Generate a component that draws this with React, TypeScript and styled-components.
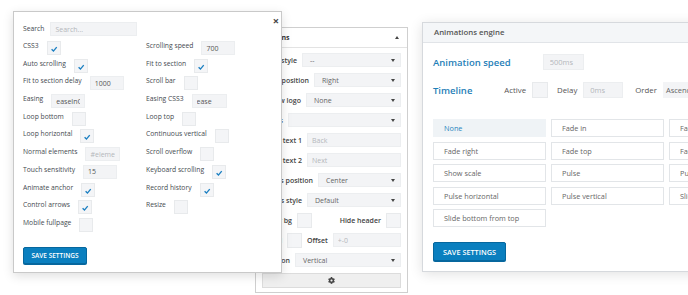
import styled, { createGlobalStyle } from 'styled-components'
import { FaCog } from 'react-icons/fa'

const GlobalStyle = createGlobalStyle`
    body {
        margin: 0;
        background: #fff;
        font-family: 'Open Sans', 'Noto Sans', sans-serif;
    }
`

type Ctl =
    | { kind: 'check'; on?: boolean }
    | { kind: 'text'; w: number; value?: string; placeholder?: string }

const modalFields: [string, Ctl][] = [
    ['CSS3', { kind: 'check', on: true }],
    ['Scrolling speed', { kind: 'text', w: 34, value: '700' }],
    ['Auto scrolling', { kind: 'check', on: true }],
    ['Fit to section', { kind: 'check', on: true }],
    ['Fit to section delay', { kind: 'text', w: 34, value: '1000' }],
    ['Scroll bar', { kind: 'check' }],
    ['Easing', { kind: 'text', w: 34, value: 'easeInOutCubic' }],
    ['Easing CSS3', { kind: 'text', w: 35, value: 'ease' }],
    ['Loop bottom', { kind: 'check' }],
    ['Loop top', { kind: 'check' }],
    ['Loop horizontal', { kind: 'check', on: true }],
    ['Continuous vertical', { kind: 'check' }],
    ['Normal elements', { kind: 'text', w: 35, placeholder: '#element' }],
    ['Scroll overflow', { kind: 'check' }],
    ['Touch sensitivity', { kind: 'text', w: 34, value: '15' }],
    ['Keyboard scrolling', { kind: 'check', on: true }],
    ['Animate anchor', { kind: 'check', on: true }],
    ['Record history', { kind: 'check', on: true }],
    ['Control arrows', { kind: 'check', on: true }],
    ['Resize', { kind: 'check' }],
    ['Mobile fullpage', { kind: 'check' }],
]

const animations = [
    'None', 'Fade in', 'Fade left',
    'Fade right', 'Fade top', 'Fade bottom',
    'Show scale', 'Pulse', 'Pulse scale',
    'Pulse horizontal', 'Pulse vertical', 'Slide top from bottom',
    'Slide bottom from top',
]

const Tick = () => (
    <svg width="8" height="8" viewBox="0 0 10 10">
        <path d="M2 5.4l2.3 2.2L8.4 2.6" fill="none" stroke="#1b7fc1" strokeWidth="1.7" />
    </svg>
)

const Check = ({ on, size }: { on?: boolean; size?: number }) => (
    <CheckBox $size={size ?? 14}>{on && <Tick />}</CheckBox>
)

const Control = ({ c }: { c: Ctl }) =>
    c.kind === 'check'
        ? <Check on={c.on} />
        : <Field $w={c.w} readOnly defaultValue={c.value} placeholder={c.placeholder} />

export default function App() {
    return <>
        <GlobalStyle />
        <Canvas>
            <Modal>
                <Close>×</Close>
                <SearchRow>
                    <Label>Search</Label>
                    <Field $w={87} readOnly placeholder="Search..." />
                </SearchRow>
                <SettingsGrid>
                    {modalFields.map(([label, c]) => (
                        <Pair key={label}>
                            <Label>{label}</Label>
                            <Control c={c} />
                        </Pair>
                    ))}
                </SettingsGrid>
                <SaveButton $small>Save settings</SaveButton>
            </Modal>

            <OptionsPanel>
                <PanelHead>
                    <span>Options</span>
                    <UpCaret />
                </PanelHead>
                <OptionsBody>
                    <OptRow>
                        <OptLabel $w={35}>Menu style</OptLabel>
                        <Select>-- <Caret /></Select>
                    </OptRow>
                    <OptRow>
                        <OptLabel $w={47}>Menu position</OptLabel>
                        <Select>Right <Caret /></Select>
                    </OptRow>
                    <OptRow>
                        <OptLabel $w={39}>Show logo</OptLabel>
                        <Select>None <Caret /></Select>
                    </OptRow>
                    <OptRow>
                        <OptLabel $w={21}>Items</OptLabel>
                        <Select><span /> <Caret /></Select>
                    </OptRow>
                    <OptRow>
                        <OptLabel $w={40}>Button text 1</OptLabel>
                        <Field $w={95} $grow readOnly placeholder="Back" />
                    </OptRow>
                    <OptRow>
                        <OptLabel $w={40}>Button text 2</OptLabel>
                        <Field $w={95} $grow readOnly placeholder="Next" />
                    </OptRow>
                    <OptRow>
                        <OptLabel $w={51}>Buttons position</OptLabel>
                        <Select>Center <Caret /></Select>
                    </OptRow>
                    <OptRow>
                        <OptLabel $w={40}>Buttons style</OptLabel>
                        <Select>Default <Caret /></Select>
                    </OptRow>
                    <OptRow>
                        <OptLabel $w={30}>Header bg</OptLabel>
                        <Check size={15} />
                        <Spacer />
                        <OptLabel>Hide header</OptLabel>
                        <Check size={15} />
                    </OptRow>
                    <OptRow>
                        <OptLabel $w={20}>Fixed</OptLabel>
                        <Check size={15} />
                        <OptLabel>Offset</OptLabel>
                        <Field $w={69} $grow readOnly placeholder="+-0" />
                    </OptRow>
                    <OptRow>
                        <OptLabel $w={28}>Orientation</OptLabel>
                        <Select>Vertical <Caret /></Select>
                    </OptRow>
                    <GearButton><FaCog size={7} /></GearButton>
                </OptionsBody>
            </OptionsPanel>

            <EnginePanel>
                <EngineHead>Animations engine</EngineHead>
                <EngineBody>
                    <EngineRow>
                        <Title>Animation speed</Title>
                        <Field $w={41} $tall readOnly placeholder="500ms" />
                    </EngineRow>
                    <EngineRow $top={12}>
                        <Title>Timeline</Title>
                        <Inline>
                            <SmallLabel>Active</SmallLabel>
                            <Check size={16} />
                            <SmallLabel $ml={3}>Delay</SmallLabel>
                            <Field $w={40} $tall readOnly placeholder="0ms" />
                            <SmallLabel $ml={6}>Order</SmallLabel>
                            <OrderSelect>Ascending</OrderSelect>
                        </Inline>
                    </EngineRow>
                    <AnimGrid>
                        {animations.map((a, i) => (
                            <AnimOption key={a} $active={i === 0}>{a}</AnimOption>
                        ))}
                    </AnimGrid>
                    <SaveButton>Save settings</SaveButton>
                </EngineBody>
            </EnginePanel>
        </Canvas>
    </>
}

const Canvas = styled.div`
    position: relative;
    width: 688px;
    height: 295px;
    overflow: hidden;
    background: #fff;
`

/* ---------- settings modal ---------- */

const Modal = styled.div`
    position: absolute;
    left: 13px;
    top: 11px;
    z-index: 2;
    width: 269px;
    height: 262px;
    box-sizing: border-box;
    padding: 10px 9px 0;
    background: #fff;
    border: 1px solid #c9c9c9;
    box-shadow: 0 3px 10px rgba(0, 0, 0, 0.13);
`

const Close = styled.div`
    position: absolute;
    top: 3px;
    right: 2px;
    font-size: 11px;
    line-height: 11px;
    font-weight: 700;
    color: #444;
`

const Label = styled.span`
    font-size: 6.75px;
    line-height: 10px;
    font-weight: 400;
    color: #454a4f;
    white-space: nowrap;
`

const SearchRow = styled.div`
    display: flex;
    align-items: center;
    gap: 6px;
    height: 14px;
`

const SettingsGrid = styled.div`
    display: grid;
    grid-template-columns: 123px 1fr;
    grid-auto-rows: 14px;
    row-gap: 3.7px;
    margin-top: 5px;
`

const Pair = styled.div`
    display: flex;
    align-items: flex-start;
    gap: 8px;
`

const CheckBox = styled.span<{ $size: number }>`
    display: inline-flex;
    align-items: center;
    justify-content: center;
    flex: none;
    width: ${p => p.$size}px;
    height: ${p => p.$size}px;
    box-sizing: border-box;
    padding-top: 2px;
    background: #f4f5f7;
    border: 1px solid #e8eaec;
`

const Field = styled.input<{ $w: number; $grow?: boolean; $tall?: boolean }>`
    width: ${p => p.$w}px;
    flex: ${p => (p.$grow ? '1' : 'none')};
    min-width: 0;
    height: ${p => (p.$tall ? 16 : 14)}px;
    box-sizing: border-box;
    margin: 0;
    padding: 0 ${p => (p.$tall ? 6 : 4)}px;
    background: #f3f4f6;
    border: 1px solid #eceef0;
    border-radius: 0;
    outline: none;
    font-family: inherit;
    font-size: ${p => (p.$tall ? 7.5 : 7)}px;
    color: #555;

    &::placeholder {
        color: #b3b7bb;
    }
`

const SaveButton = styled.div<{ $small?: boolean }>`
    display: inline-flex;
    align-items: center;
    justify-content: center;
    box-sizing: border-box;
    width: ${p => (p.$small ? 64 : 73)}px;
    height: ${p => (p.$small ? 17 : 19)}px;
    margin-top: 15px;
    background: #0a7fbf;
    border: 1px solid #06679e;
    border-radius: 2px;
    box-shadow: 0 1px 0 #06679e;
    color: #fff;
    font-size: ${p => (p.$small ? 6.5 : 7.3)}px;
    font-weight: 600;
    text-transform: uppercase;
    white-space: nowrap;
`

/* ---------- options side panel ---------- */

const OptionsPanel = styled.div`
    position: absolute;
    left: 255px;
    top: 27px;
    z-index: 1;
    width: 153px;
    height: 266px;
    box-sizing: border-box;
    overflow: hidden;
    background: #fff;
    border: 1px solid #cfcfcf;
`

const PanelHead = styled.div`
    display: flex;
    align-items: center;
    justify-content: space-between;
    height: 19px;
    padding: 0 8px 0 6px;
    border-bottom: 1px solid #e3e3e3;
    font-size: 7px;
    font-weight: 700;
    color: #333;
`

const UpCaret = styled.span`
    border-left: 2px solid transparent;
    border-right: 2px solid transparent;
    border-bottom: 3px solid #444;
`

const OptionsBody = styled.div`
    display: flex;
    flex-direction: column;
    gap: 6px;
    padding: 5px 6px 0;
`

const OptRow = styled.div`
    display: flex;
    align-items: center;
    gap: 5px;
    height: 14px;
`

const OptLabel = styled.div<{ $w?: number }>`
    display: flex;
    justify-content: flex-end;
    flex: none;
    width: ${p => (p.$w ? `${p.$w}px` : 'auto')};
    white-space: nowrap;
    font-size: 7px;
    font-weight: 600;
    color: #444;
`

const Spacer = styled.div`
    flex: 1;
`

const Select = styled.div`
    display: flex;
    align-items: center;
    justify-content: space-between;
    flex: 1;
    height: 14px;
    box-sizing: border-box;
    padding: 0 5px 0 7px;
    background: #f3f4f6;
    border: 1px solid #eceef0;
    font-size: 7px;
    color: #666;
`

const Caret = styled.span`
    border-left: 2px solid transparent;
    border-right: 2px solid transparent;
    border-top: 3px solid #444;
`

const GearButton = styled.div`
    display: flex;
    align-items: center;
    justify-content: center;
    height: 15px;
    box-sizing: border-box;
    background: #efefef;
    border: 1px solid #dcdcdc;
    color: #444;
`

/* ---------- animations engine ---------- */

const EnginePanel = styled.div`
    position: absolute;
    left: 422px;
    top: 22px;
    width: 300px;
    height: 250px;
    box-sizing: border-box;
    background: #fff;
    border: 1px solid #d6d9dd;
    box-shadow: 0 2px 12px rgba(0, 0, 0, 0.12);
`

const EngineHead = styled.div`
    height: 19px;
    padding-left: 11px;
    background: #f4f6f8;
    border-bottom: 1px solid #e1e4e8;
    font-size: 7.8px;
    line-height: 19px;
    font-weight: 600;
    color: #555;
`

const EngineBody = styled.div`
    padding: 11px 0 0 10px;
`

const EngineRow = styled.div<{ $top?: number }>`
    display: flex;
    align-items: center;
    gap: 32px;
    height: 16px;
    margin-top: ${p => p.$top ?? 0}px;
`

const Title = styled.div`
    font-size: 9.5px;
    font-weight: 600;
    color: #1f7fb8;
    white-space: nowrap;
`

const Inline = styled.div`
    display: flex;
    align-items: center;
    gap: 6px;
`

const SmallLabel = styled.span<{ $ml?: number }>`
    margin-left: ${p => p.$ml ?? 0}px;
    font-size: 7.8px;
    color: #555;
`

const OrderSelect = styled.div`
    display: flex;
    align-items: center;
    width: 60px;
    height: 16px;
    padding-left: 3px;
    background: #f3f4f6;
    font-size: 7.5px;
    color: #666;
    white-space: nowrap;
`

const AnimGrid = styled.div`
    display: grid;
    grid-template-columns: repeat(3, 113px);
    grid-auto-rows: 18px;
    column-gap: 5px;
    row-gap: 4.5px;
    margin-top: 21px;
`

const AnimOption = styled.div<{ $active?: boolean }>`
    display: flex;
    align-items: center;
    box-sizing: border-box;
    padding-left: 10px;
    background: ${p => (p.$active ? '#eff3f6' : '#fff')};
    border: 1px solid ${p => (p.$active ? '#eff3f6' : '#e2e5e8')};
    font-size: 7.3px;
    color: ${p => (p.$active ? '#2a86be' : '#666')};
    white-space: nowrap;
    overflow: hidden;
`
